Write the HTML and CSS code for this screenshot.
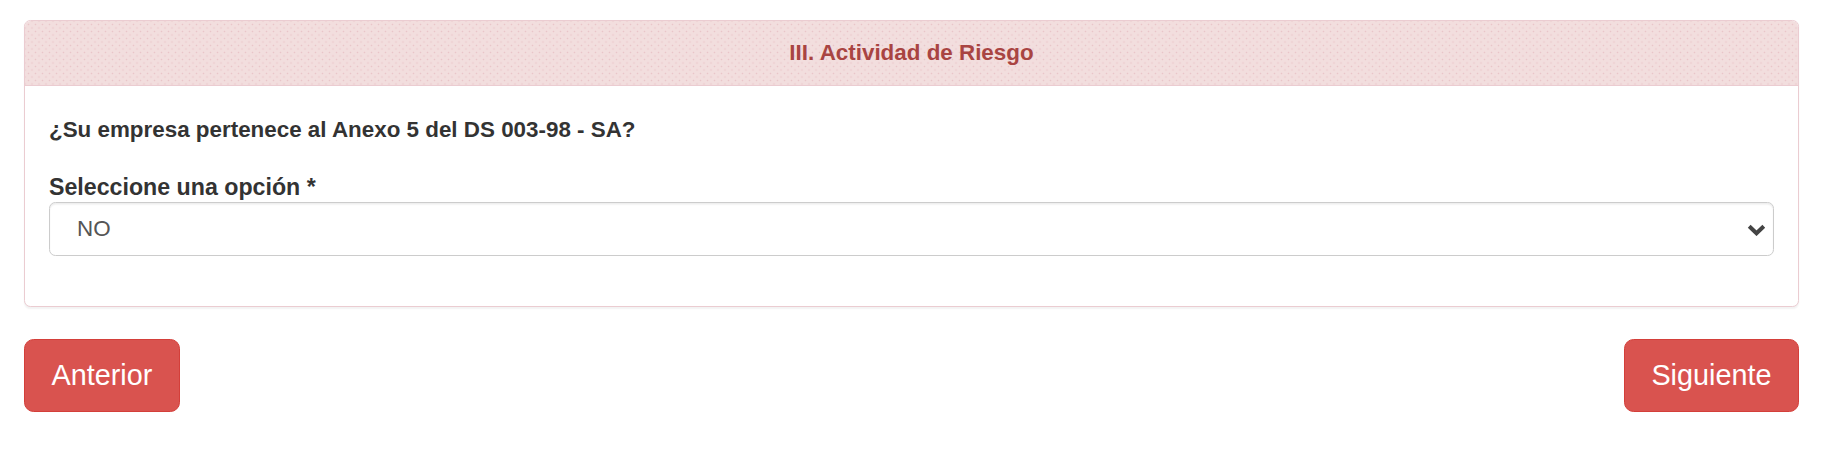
FILE: index.html
```html
<!DOCTYPE html>
<html lang="es">
<head>
<meta charset="utf-8">
<title>Actividad de Riesgo</title>
<link rel="stylesheet" href="styles.css">
</head>
<body>
<div class="page">
  <section class="panel">
    <header class="panel-heading">
      <h3 class="panel-title">III. Actividad de Riesgo</h3>
    </header>
    <div class="panel-body">
      <p class="question">¿Su empresa pertenece al Anexo 5 del DS 003-98 - SA?</p>
      <div class="form-group">
        <label class="field-label" for="opt">Seleccione una opción *</label>
        <div class="select-wrap">
          <select id="opt" class="select">
            <option>NO</option>
            <option>SI</option>
          </select>
          <svg class="chevron" width="19" height="12" viewBox="0 0 19 12" aria-hidden="true">
            <polyline points="2.2,2.2 9.5,9.3 16.8,2.2" fill="none" stroke="#444" stroke-width="4" stroke-linejoin="miter" stroke-linecap="butt"/>
          </svg>
        </div>
      </div>
    </div>
  </section>
  <div class="actions">
    <button type="button" class="btn">Anterior</button>
    <button type="button" class="btn">Siguiente</button>
  </div>
</div>
</body>
</html>
```
FILE: styles.css
```css
* {
  box-sizing: border-box;
}

html, body {
  margin: 0;
  padding: 0;
  background: #fff;
}

body {
  font-family: "Liberation Sans", Arial, Helvetica, sans-serif;
  font-size: 22.4px;
  line-height: 32px;
  color: #333;
}

.page {
  padding: 20px 29px 0 24px;
}

.panel {
  background: #fff;
  border: 1.6px solid #ebccd1;
  border-radius: 6.4px;
  box-shadow: 0 1.6px 1.6px rgba(0, 0, 0, 0.05);
  overflow: hidden;
}

.panel-heading {
  background-color: #f2dede;
  background-image:
    radial-gradient(circle, rgba(214, 150, 160, 0.35) 0.7px, transparent 1.1px),
    radial-gradient(circle, rgba(214, 150, 160, 0.35) 0.7px, transparent 1.1px);
  background-size: 7px 7px, 7px 7px;
  background-position: 0 0, 3.5px 3.5px;
  border-bottom: 1.6px solid #ebccd1;
  padding: 16px 24px;
}

.panel-title {
  margin: 0;
  font-size: 22.4px;
  line-height: 32px;
  font-weight: bold;
  color: #a94442;
  text-align: center;
}

.panel-body {
  padding: 27.5px 24px 24px;
}

.question {
  margin: 0 0 26.5px;
  font-weight: bold;
}

.form-group {
  margin-bottom: 25.8px;
}

.field-label {
  display: block;
  margin-bottom: 0;
  font-size: 23.2px;
  line-height: 30px;
  font-weight: bold;
}

.select-wrap {
  position: relative;
}

.select {
  display: block;
  width: 100%;
  height: 54.4px;
  padding: 9.6px 40px 9.6px 27px;
  font-family: inherit;
  font-size: 22.4px;
  line-height: 32px;
  color: #555;
  background: #fff;
  border: 1.6px solid #ccc;
  border-radius: 6.4px;
  box-shadow: inset 0 1.6px 1.6px rgba(0, 0, 0, 0.075);
  -webkit-appearance: none;
  appearance: none;
  outline: none;
}

.chevron {
  position: absolute;
  right: 8px;
  top: 22px;
  pointer-events: none;
}

.actions {
  display: flex;
  justify-content: space-between;
  margin-top: 32px;
}

.btn {
  font-family: inherit;
  font-size: 28.8px;
  line-height: 38.4px;
  padding: 16px 26.5px;
  color: #fff;
  background-color: #d9534f;
  border: 1.6px solid #d43f3a;
  border-radius: 9.6px;
  cursor: pointer;
}
```
